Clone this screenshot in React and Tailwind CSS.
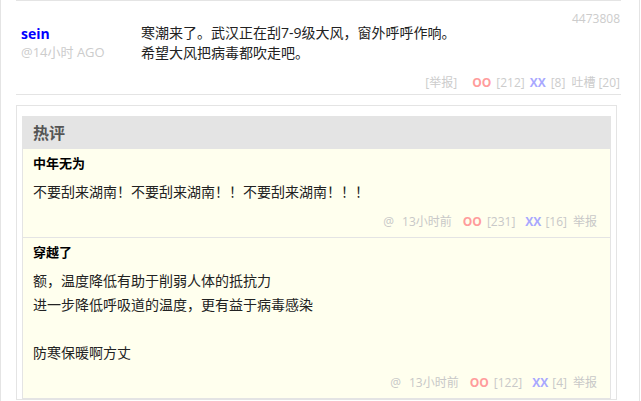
import React from 'react';

const font = { fontFamily: '"Open Sans", "Noto Sans CJK SC", sans-serif' };

const hot = [
  {
    author: '中年无为',
    lines: ['不要刮来湖南！不要刮来湖南！！不要刮来湖南！！！'],
    time: '13小时前',
    oo: 231,
    xx: 16,
  },
  {
    author: '穿越了',
    lines: ['额，温度降低有助于削弱人体的抵抗力', '进一步降低呼吸道的温度，更有益于病毒感染', '', '防寒保暖啊方丈'],
    time: '13小时前',
    oo: 122,
    xx: 4,
  },
];

function HotComment({ c, last }) {
  return (
    <div className={`pl-[10px] pr-[13px] pt-[5px] pb-[6px] ${last ? '' : 'border-b border-[#e4e4e4]'}`}>
      <div className="text-[13px] leading-[18px] font-bold text-black">{c.author}</div>
      <div className="mt-[8px] text-[14px] leading-[24px] text-[#222]">
        {c.lines.map((l, i) => (
          <p key={i} className="h-[24px]">{l}</p>
        ))}
      </div>
      <div className="mt-[9px] flex justify-end items-center text-[12px] leading-[18px] text-[#c8c8c8]">
        <span>@</span>
        <span className="ml-[8px]">{c.time}</span>
        <b className="ml-[11px] text-[#ff9c9c]">OO</b>
        <span className="ml-[5px]">[{c.oo}]</span>
        <b className="ml-[10px] text-[#a8a8ff]">XX</b>
        <span className="ml-[4px]">[{c.xx}]</span>
        <span className="ml-[6px]">举报</span>
      </div>
    </div>
  );
}

export default function App() {
  return (
    <div className="w-[641px] h-[401px] overflow-hidden bg-white" style={font}>
      <div className="w-[640px] h-full border-l border-r border-[#e4e4e4] pl-[15px] pr-[18px]">
        {/* post */}
        <div className="border-t border-b border-[#e4e4e4] pt-[22px] pb-[2px]">
          <div className="flex">
            <div className="w-[125px] shrink-0 pl-[5px] pt-[2px]">
              <div className="text-[14px] leading-[18px] font-bold text-[#0000ff]">sein</div>
              <div className="text-[13px] leading-[18px] text-[#cccccc]">@14小时 AGO</div>
            </div>
            <div className="flex-1 text-[14px] leading-[20px] text-[#222]">
              <p>寒潮来了。武汉正在刮7-9级大风，窗外呼呼作响。</p>
              <p>希望大风把病毒都吹走吧。</p>
            </div>
            <div className="shrink-0 -mt-[12px] pr-[1px] text-[12px] leading-[16px] text-[#cccccc]">4473808</div>
          </div>
          <div className="mt-[11px] flex justify-end items-center pr-[1px] text-[12px] leading-[18px] text-[#cccccc]">
            <span>[举报]</span>
            <b className="ml-[15px] text-[#ff9c9c]">OO</b>
            <span className="ml-[5px]">[212]</span>
            <b className="ml-[5px] text-[#a8a8ff]">XX</b>
            <span className="ml-[5px]">[8]</span>
            <span className="ml-[6px]">吐槽</span>
            <span className="ml-[3px]">[20]</span>
          </div>
        </div>

        {/* hot comments */}
        <div className="mt-[10px] w-[601px] border border-[#e4e4e4] px-[5px] pt-[10px]">
          <div className="h-[33px] bg-[#e4e4e4] pl-[11px] flex items-center">
            <span className="text-[16px] font-bold text-[#555]">热评</span>
          </div>
          <div className="bg-[#ffffee] border border-t-0 border-[#e4e4e4]">
            {hot.map((c, i) => (
              <HotComment key={i} c={c} last={i === hot.length - 1} />
            ))}
          </div>
        </div>
      </div>
    </div>
  );
}
